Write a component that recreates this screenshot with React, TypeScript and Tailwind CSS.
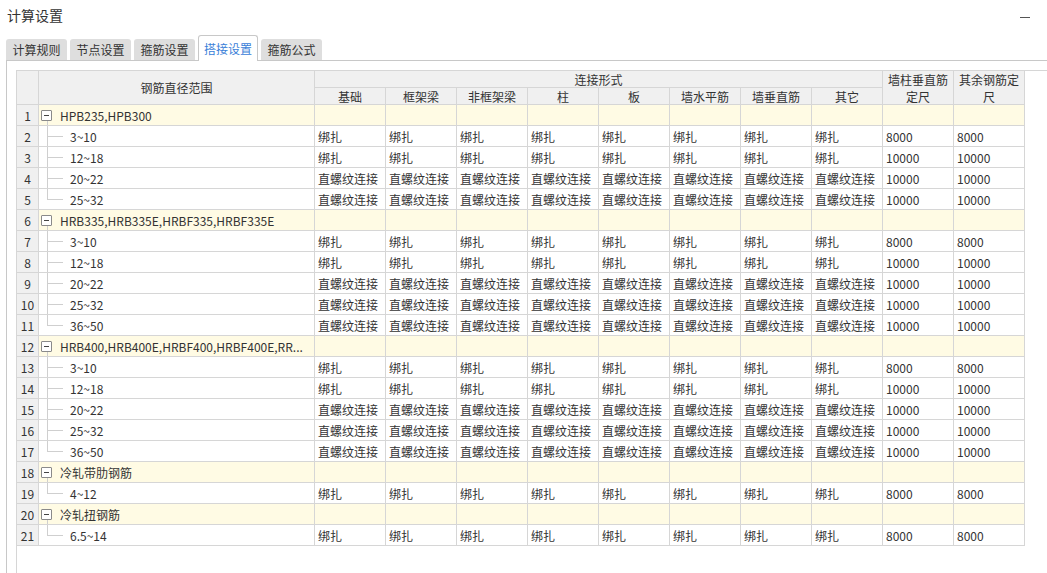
import React from 'react'

type Row = { range: string; kind: 'b' | 'z'; wall: number; other: number }
type Group = { name: string; rows: Row[] }

const b = (range: string, wall: number, other: number): Row => ({ range, kind: 'b', wall, other })
const z = (range: string): Row => ({ range, kind: 'z', wall: 10000, other: 10000 })

const groups: Group[] = [
  { name: 'HPB235,HPB300', rows: [b('3~10', 8000, 8000), b('12~18', 10000, 10000), z('20~22'), z('25~32')] },
  {
    name: 'HRB335,HRB335E,HRBF335,HRBF335E',
    rows: [b('3~10', 8000, 8000), b('12~18', 10000, 10000), z('20~22'), z('25~32'), z('36~50')],
  },
  {
    name: 'HRB400,HRB400E,HRBF400,HRBF400E,RR...',
    rows: [b('3~10', 8000, 8000), b('12~18', 10000, 10000), z('20~22'), z('25~32'), z('36~50')],
  },
  { name: '冷轧带肋钢筋', rows: [b('4~12', 8000, 8000)] },
  { name: '冷轧扭钢筋', rows: [b('6.5~14', 8000, 8000)] },
]

const tabs = ['计算规则', '节点设置', '箍筋设置', '搭接设置', '箍筋公式']
const joinCols = ['基础', '框架梁', '非框架梁', '柱', '板', '墙水平筋', '墙垂直筋', '其它']

const cell = 'border-r border-b border-[#d6d6d6]'
const head = `${cell} bg-[#f0f0f0] flex items-center justify-center text-center`
const numCell = `${cell} bg-[#f0f0f0] flex items-center justify-center`

function GroupRow({ no, name }: { no: number; name: string }) {
  return (
    <>
      <div className={numCell}>{no}</div>
      <div className={`${cell} relative flex items-center bg-[#fffbe4] pl-[2px]`}>
        <span className="flex h-[11px] w-[11px] shrink-0 items-center justify-center rounded-[1px] border border-[#8a8a8a] bg-white">
          <span className="h-px w-[5px] bg-[#444]" />
        </span>
        <span className="ml-[8px] whitespace-nowrap">{name}</span>
        <span className="absolute bottom-0 left-[8px] h-[4px] w-px bg-[#cfcfcf]" />
      </div>
      {Array.from({ length: 10 }).map((_, i) => (
        <div key={i} className={`${cell} bg-[#fffbe4]`} />
      ))}
    </>
  )
}

function ChildRow({ no, row, last }: { no: number; row: Row; last: boolean }) {
  const text = row.kind === 'b' ? '绑扎' : '直螺纹连接'
  return (
    <>
      <div className={numCell}>{no}</div>
      <div className={`${cell} relative flex items-center pl-[31px]`}>
        <span className={`absolute left-[8px] top-0 w-px bg-[#cfcfcf] ${last ? 'h-[10px]' : 'h-full'}`} />
        <span className="absolute left-[8px] top-[10px] h-px w-[16px] bg-[#cfcfcf]" />
        {row.range}
      </div>
      {joinCols.map((c) => (
        <div key={c} className={`${cell} flex items-center overflow-hidden whitespace-nowrap pl-[3px]`}>
          {text}
        </div>
      ))}
      <div className={`${cell} flex items-center pl-[3px]`}>{row.wall}</div>
      <div className={`${cell} flex items-center pl-[3px]`}>{row.other}</div>
    </>
  )
}

export default function App() {
  let no = 0
  return (
    <div className="flex h-screen flex-col overflow-hidden bg-white font-['Noto_Sans_CJK_SC','Microsoft_YaHei',sans-serif] text-[12px] text-[#333]">
      <div className="flex h-[30px] shrink-0 items-center justify-between pl-[7px] pr-[17px]">
        <span className="text-[14px] leading-none">计算设置</span>
        <span className="mt-[4px] h-px w-[10px] bg-[#555]" />
      </div>

      <div className="flex h-[30px] shrink-0 items-end gap-[3px] pl-[6px]">
        {tabs.map((t, i) =>
          i === 3 ? (
            <div
              key={t}
              className="relative -mb-px flex h-[26px] w-[60px] items-center justify-center rounded-t-[3px] border border-b-0 border-[#c8c8c8] bg-white text-[#3a80d8]"
            >
              {t}
            </div>
          ) : (
            <div key={t} className="flex h-[21px] w-[61px] items-center justify-center rounded-t-[3px] bg-[#dedede]">
              {t}
            </div>
          ),
        )}
      </div>

      <div className="ml-[6px] flex flex-1 flex-col border-l border-t border-[#c8c8c8] pl-[9px] pt-[9px]">
        <div className="flex-1 border-l border-t border-[#d6d6d6]">
          <div className="grid grid-cols-[22px_276px_repeat(10,71px)] grid-rows-[17px_17px] auto-rows-[21px] leading-[17px]">
            <div className={`${head} row-span-2`} />
            <div className={`${head} row-span-2`}>钢筋直径范围</div>
            <div className={`${head} col-span-8`}>连接形式</div>
            <div className={`${head} row-span-2 px-[2px]`}>墙柱垂直筋定尺</div>
            <div className={`${head} row-span-2 px-[2px]`}>其余钢筋定尺</div>
            {joinCols.map((c) => (
              <div key={c} className={head}>
                {c}
              </div>
            ))}
            {groups.map((g) => {
              no += 1
              const gNo = no
              return (
                <React.Fragment key={g.name}>
                  <GroupRow no={gNo} name={g.name} />
                  {g.rows.map((r, i) => {
                    no += 1
                    return <ChildRow key={r.range} no={no} row={r} last={i === g.rows.length - 1} />
                  })}
                </React.Fragment>
              )
            })}
          </div>
        </div>
      </div>
    </div>
  )
}
